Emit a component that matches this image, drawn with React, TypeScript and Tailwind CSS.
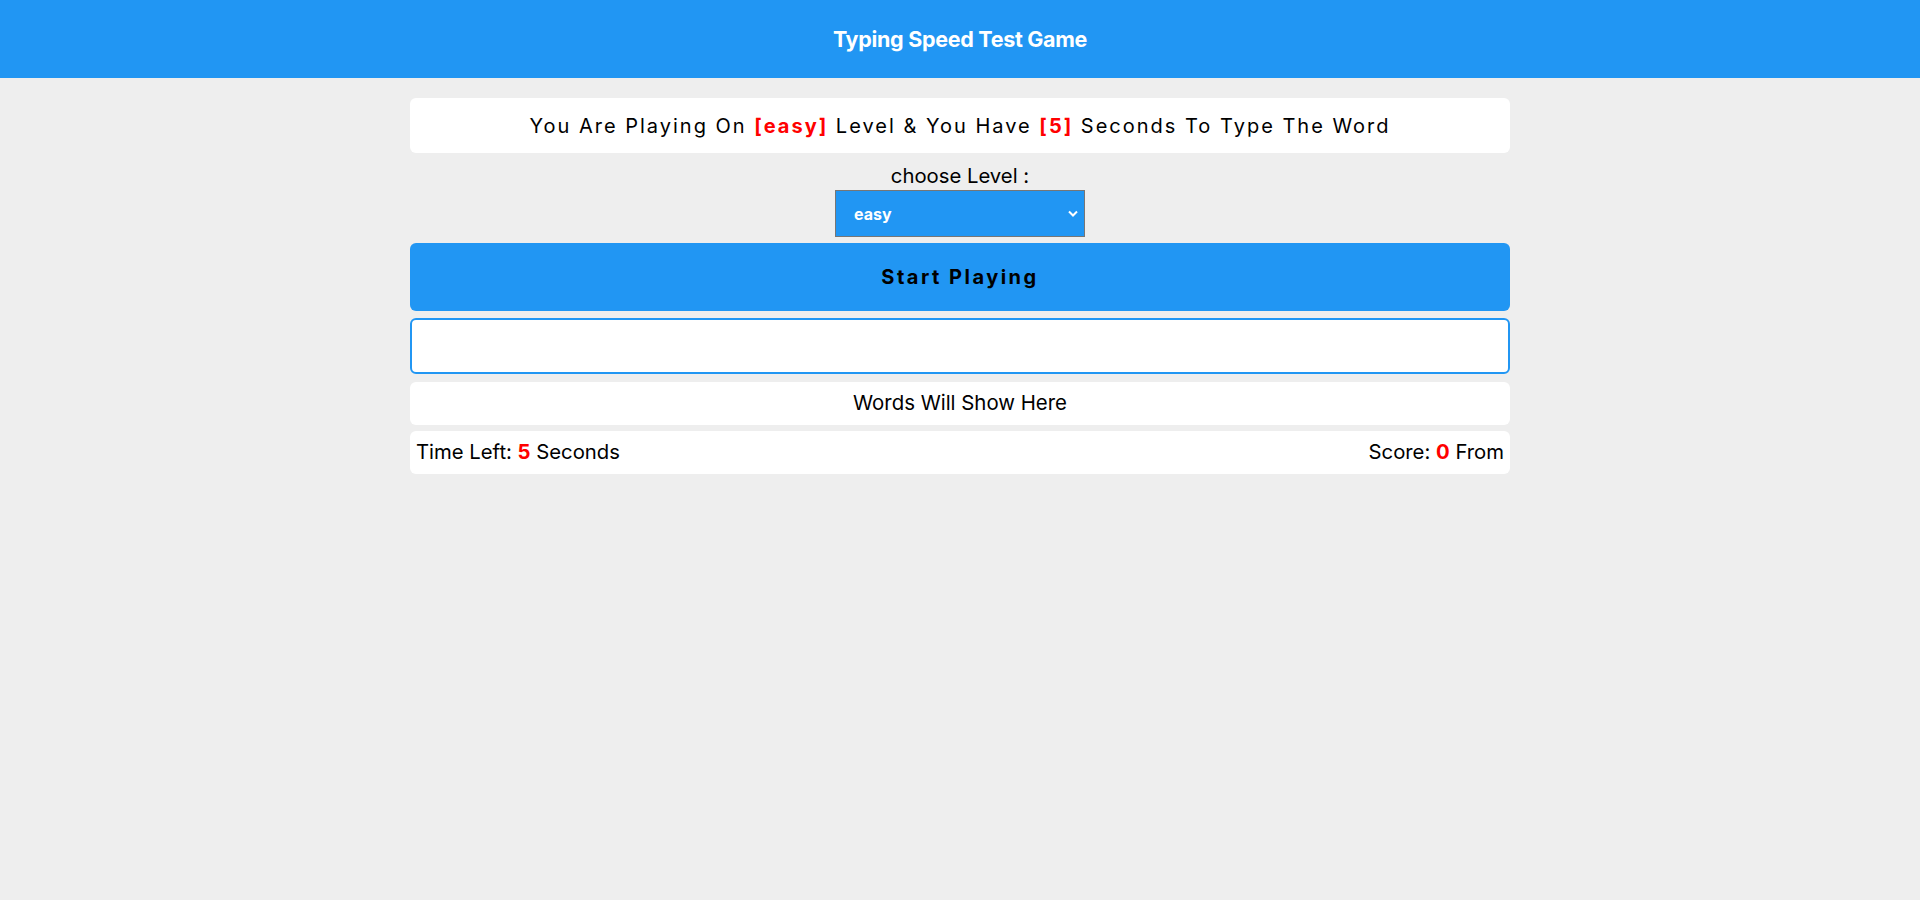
import { useState } from 'react'

export default function App() {
  const [level, setLevel] = useState('easy')
  const [typed, setTyped] = useState('')
  const seconds = level === 'easy' ? 5 : level === 'normal' ? 3 : 2

  return (
    <div className="min-h-[900px] bg-[#eeeeee] text-black" style={{ fontFamily: 'Inter, "Open Sans", sans-serif' }}>
      <header className="flex h-[78px] items-center justify-center bg-[#2196f3]">
        <h1 className="text-[21.5px] font-bold tracking-[-0.3px] text-white">Typing Speed Test Game</h1>
      </header>

      <main className="mx-auto flex w-[1100px] flex-col pt-5">
        {/* Level message */}
        <div className="flex h-[55px] items-center justify-center rounded-md bg-white text-[20px] tracking-[2px]">
          <span>
            You Are Playing On <span className="font-bold text-[#ff0000]">[{level}]</span> Level &amp; You Have{' '}
            <span className="font-bold text-[#ff0000]">[{seconds}]</span> Seconds To Type The Word
          </span>
        </div>

        {/* Level picker */}
        <div className="flex flex-col items-center pt-[9px]">
          <label className="text-[20.3px] leading-[27px]">choose Level :</label>
          <div className="relative mt-[1px]">
            <select
              value={level}
              onChange={e => setLevel(e.target.value)}
              className="h-[47px] w-[250px] appearance-none border border-[#767676] bg-[#2196f3] pl-[18px] text-[16px] font-bold text-white outline-none"
            >
              <option value="easy">easy</option>
              <option value="normal">normal</option>
              <option value="hard">hard</option>
            </select>
            <svg className="pointer-events-none absolute right-[6px] top-[19px]" width="12" height="9" viewBox="0 0 12 9" fill="none">
              <path d="M2 2.5l4 4 4-4" stroke="white" strokeWidth="2" />
            </svg>
          </div>
        </div>

        <button className="mt-[6px] flex h-[68px] items-center justify-center rounded-md bg-[#2196f3] text-[20px] font-bold tracking-[2.5px] text-black">
          Start Playing
        </button>

        <input
          value={typed}
          onChange={e => setTyped(e.target.value)}
          className="mt-[7px] h-[56px] rounded-md border-2 border-[#2196f3] bg-white px-3 text-[20px] outline-none"
        />

        <div className="mt-[8px] flex h-[43px] items-center justify-center rounded-md bg-white text-[20.4px]">
          Words Will Show Here
        </div>

        <div className="mt-[6px] flex h-[43px] items-center justify-between rounded-md bg-white px-[6px] text-[20.3px]">
          <span>
            Time Left: <span className="font-bold text-[#ff0000]">{seconds}</span> Seconds
          </span>
          <span>
            Score: <span className="font-bold text-[#ff0000]">0</span> From
          </span>
        </div>
      </main>
    </div>
  )
}
